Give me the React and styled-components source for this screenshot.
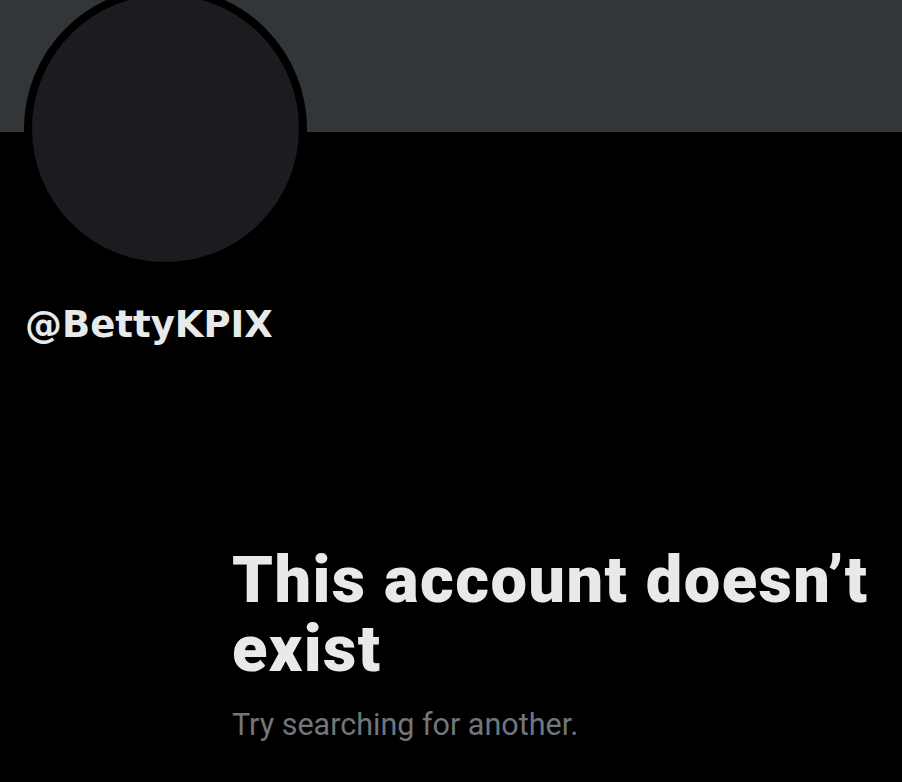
import React from "react";
import styled, { createGlobalStyle } from "styled-components";

const Global = createGlobalStyle`
  html, body { margin: 0; padding: 0; background: #000; }
  body { width: 902px; height: 782px; overflow: hidden; }
`;

const Page = styled.div`
  width: 902px;
  height: 782px;
  background: #000;
  display: flex;
  flex-direction: column;
  overflow: hidden;
`;

const Banner = styled.div`
  height: 132px;
  background: #333639;
  flex-shrink: 0;
`;

const Avatar = styled.div`
  width: 267px;
  height: 267px;
  border-radius: 50%;
  background: #1a1c20;
  border: 8px solid #000;
  margin: -145px 0 0 24px;
  position: relative;
  flex-shrink: 0;
`;

const Handle = styled.div`
  margin: 33px 0 0 25px;
  font-family: "DejaVu Sans", sans-serif;
  font-weight: 700;
  font-size: 37px;
  line-height: 44px;
  color: #e7e9ea;
`;

const Message = styled.div`
  margin: 199px 0 0 232px;
  display: flex;
  flex-direction: column;
  gap: 23px;
`;

const Title = styled.h1`
  margin: 0;
  font-family: Roboto, sans-serif;
  font-weight: 900;
  font-size: 65px;
  line-height: 69px;
  letter-spacing: 1.4px;
  color: #e7e9ea;
`;

const Sub = styled.p`
  margin: 0;
  font-family: Roboto, sans-serif;
  font-size: 30.5px;
  line-height: 36px;
  color: #71767b;
`;

export default function App() {
  return (
    <Page>
      <Global />
      <Banner />
      <Avatar />
      <Handle>@BettyKPIX</Handle>
      <Message>
        <Title>This account doesn’t exist</Title>
        <Sub>Try searching for another.</Sub>
      </Message>
    </Page>
  );
}
